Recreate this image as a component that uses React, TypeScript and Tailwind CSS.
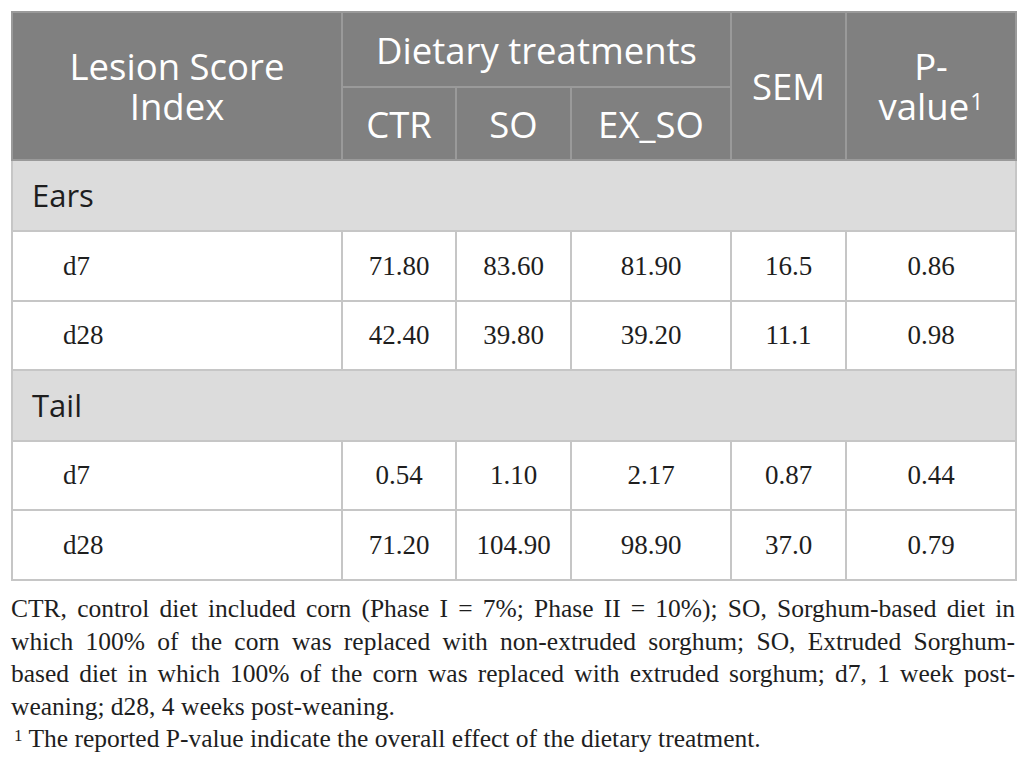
import React from "react";

const sans = { fontFamily: "'Open Sans', Lato, sans-serif" };
const serif = { fontFamily: "'Liberation Serif', 'DejaVu Serif', serif" };

type Row = { label: string; vals: string[] };

const ears: Row[] = [
  { label: "d7", vals: ["71.80", "83.60", "81.90", "16.5", "0.86"] },
  { label: "d28", vals: ["42.40", "39.80", "39.20", "11.1", "0.98"] },
];
const tail: Row[] = [
  { label: "d7", vals: ["0.54", "1.10", "2.17", "0.87", "0.44"] },
  { label: "d28", vals: ["71.20", "104.90", "98.90", "37.0", "0.79"] },
];

function Section({ title, rows, heights }: { title: string; rows: Row[]; heights: string[] }) {
  return (
    <>
      <tr className="h-[71px] bg-[#dcdcdc]">
        <td colSpan={6} className="border-2 border-[#c6c6c6] pl-[19px] text-[31px] text-[#1e1e1e]" style={sans}>
          {title}
        </td>
      </tr>
      {rows.map((r, i) => (
        <tr key={r.label} className={heights[i] + " bg-white"}>
          <td className="border-2 border-[#c6c6c6] pl-[50px] text-[27px] text-[#1e1e1e]" style={serif}>
            {r.label}
          </td>
          {r.vals.map((v, j) => (
            <td key={j} className="border-2 border-[#c6c6c6] text-center text-[27px] text-[#1e1e1e]" style={serif}>
              {v}
            </td>
          ))}
        </tr>
      ))}
    </>
  );
}

export default function App() {
  const th = "border-2 border-[#9a9a9a] text-white font-normal text-center text-[36.5px] leading-[40px]";
  return (
    <div className="w-[1026px] h-[774px] bg-white pt-[11px] px-[11px]">
      <table className="w-[1004px] border-collapse table-fixed border-2 border-[#c0c0c0]">
        <colgroup>
          <col className="w-[330px]" />
          <col className="w-[114px]" />
          <col className="w-[115px]" />
          <col className="w-[160px]" />
          <col className="w-[115px]" />
          <col className="w-[170px]" />
        </colgroup>
        <thead className="bg-[#808080]" style={sans}>
          <tr className="h-[75px]">
            <th rowSpan={2} className={th}>
              <div>Lesion Score</div>
              <div>Index</div>
            </th>
            <th colSpan={3} className={th}>
              Dietary treatments
            </th>
            <th rowSpan={2} className={th}>
              SEM
            </th>
            <th rowSpan={2} className={th}>
              <div>P-</div>
              <div>
                value<sup className="text-[23px] relative top-[-10px] ml-[1px]">1</sup>
              </div>
            </th>
          </tr>
          <tr className="h-[73px]">
            <th className={th}>CTR</th>
            <th className={th}>SO</th>
            <th className={th}>EX_SO</th>
          </tr>
        </thead>
        <tbody>
          <Section title="Ears" rows={ears} heights={["h-[70px]", "h-[69px]"]} />
          <Section title="Tail" rows={tail} heights={["h-[69px]", "h-[70px]"]} />
        </tbody>
      </table>
      <div className="mt-[12px] w-[1004px] text-[25.5px] leading-[32.5px] text-[#1e1e1e]" style={serif}>
        <div className="whitespace-nowrap [text-align-last:justify]">
          CTR, control diet included corn (Phase I = 7%; Phase II = 10%); SO, Sorghum-based diet in
        </div>
        <div className="whitespace-nowrap [text-align-last:justify]">
          which 100% of the corn was replaced with non-extruded sorghum; SO, Extruded Sorghum-
        </div>
        <div className="whitespace-nowrap [text-align-last:justify]">
          based diet in which 100% of the corn was replaced with extruded sorghum; d7, 1 week post-
        </div>
        <div className="whitespace-nowrap">weaning; d28, 4 weeks post-weaning.</div>
        <div className="whitespace-nowrap">
          <sup className="text-[17px] relative top-[-6px] ml-[3px]">1</sup> The reported P-value indicate the overall effect of the dietary treatment.
        </div>
      </div>
    </div>
  );
}
